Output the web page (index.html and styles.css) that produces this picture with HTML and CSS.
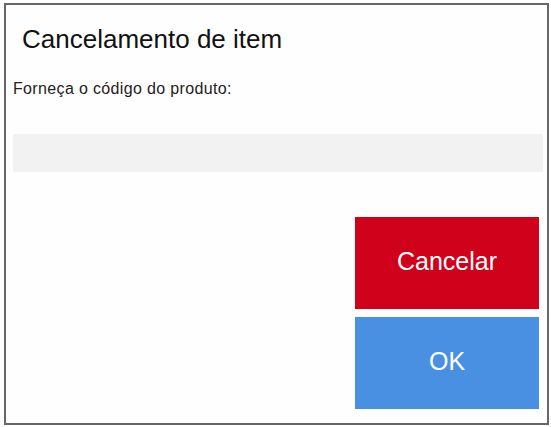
FILE: index.html
```html
<!DOCTYPE html>
<html lang="pt">
<head>
<meta charset="utf-8">
<title>Cancelamento de item</title>
<link rel="stylesheet" href="styles.css">
</head>
<body>
<div class="dialog">
  <h1 class="title">Cancelamento de item</h1>
  <p class="label">Forneça o código do produto:</p>
  <div class="field"></div>
  <div class="actions">
    <button class="btn btn-cancel">Cancelar</button>
    <button class="btn btn-ok">OK</button>
  </div>
</div>
</body>
</html>
```

FILE: styles.css
```css
html, body {
  margin: 0;
  padding: 0;
  background: #ffffff;
}
body {
  font-family: "Liberation Sans", Arial, sans-serif;
  width: 551px;
  height: 427px;
  overflow: hidden;
}
.dialog {
  box-sizing: border-box;
  margin: 3px 0 0 4px;
  width: 545px;
  height: 422px;
  border: 2px solid #676767;
  background: #fefefe;
  display: flex;
  flex-direction: column;
}
.title {
  margin: 19px 0 0 16px;
  font-size: 26px;
  line-height: 30px;
  font-weight: normal;
  color: #111;
}
.label {
  margin: 25px 0 0 7px;
  font-size: 16px;
  line-height: 19px;
  letter-spacing: 0.35px;
  color: #222;
}
.field {
  margin: 36px 4px 0 7px;
  height: 38px;
  background: #f2f2f2;
}
.actions {
  display: flex;
  flex-direction: column;
  align-items: flex-end;
  gap: 8px;
  margin: 45px 8px 0 0;
}
.btn {
  width: 184px;
  height: 92px;
  border: none;
  padding: 0 0 4px;
  font-family: "Liberation Sans", Arial, sans-serif;
  font-size: 25px;
  color: #ffffff;
}
.btn-cancel {
  background: #d0011b;
}
.btn-ok {
  background: #4a90e2;
}
```
